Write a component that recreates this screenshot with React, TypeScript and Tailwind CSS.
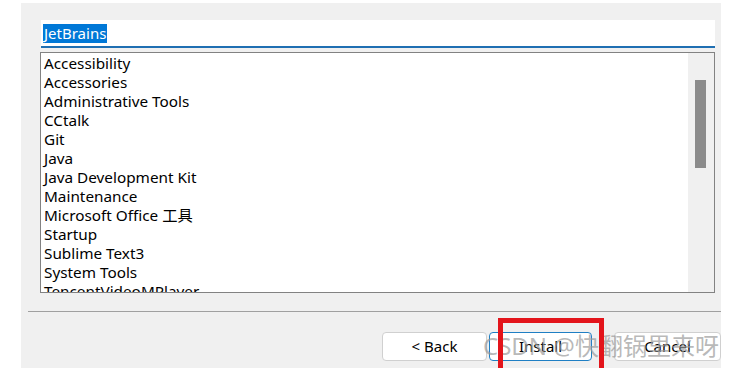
import React from 'react'

const items = [
  'Accessibility',
  'Accessories',
  'Administrative Tools',
  'CCtalk',
  'Git',
  'Java',
  'Java Development Kit',
  'Maintenance',
  'Microsoft Office 工具',
  'Startup',
  'Sublime Text3',
  'System Tools',
  'TencentVideoMPlayer',
]

const uiFont = { fontFamily: '"Noto Sans", "Noto Sans CJK SC", sans-serif' }

export default function App() {
  return (
    <div className="relative w-[730px] h-[368px] bg-white overflow-hidden pt-[3px]" style={uiFont}>
      <div className="ml-[21px] w-[700px] h-[365px] bg-[#f0f0f0] flex flex-col overflow-hidden">
        {/* folder name box */}
        <div className="mt-[17px] ml-[20px] mr-[6px] h-[28px] bg-white border-b-2 border-[#1f6fb2] flex items-center pl-[2px]">
          <span className="bg-[#0078d7] text-white text-[15px] leading-[19px] px-px">JetBrains</span>
        </div>

        {/* start menu folder list */}
        <div className="mt-[4px] ml-[19px] mr-[6px] h-[241px] border border-[#828282] bg-white flex overflow-hidden">
          <div className="flex-1 pl-[3px] pt-px overflow-hidden">
            {items.map((it) => (
              <div key={it} className="text-[15.3px] leading-[19px] text-black whitespace-nowrap">
                {it}
              </div>
            ))}
          </div>
          <div className="w-[26px] bg-[#f0f0f0] pt-[27px] pl-[7px]">
            <div className="w-[11px] h-[88px] bg-[#8b8b8b]" />
          </div>
        </div>

        <div className="mt-[18px] ml-[7px] h-px bg-[#a0a0a0]" />

        {/* buttons */}
        <div className="mt-[20px] ml-[361px] flex items-center text-[15px] text-black">
          <button className="w-[109px] h-[29px] bg-white border border-[#d0d0d0] rounded-[4px]">&lt; Back</button>
          <button className="ml-[2px] w-[107px] h-[29px] bg-white border border-[#1f7fc4] rounded-[4px]">Install</button>
          <button className="ml-[22px] w-[107px] h-[29px] shrink-0 bg-white border border-[#d0d0d0] rounded-[4px]">Cancel</button>
        </div>
      </div>

      {/* watermark */}
      <div className="absolute left-[483px] top-[331px] text-[24px] leading-[30px] text-[#9a9a9a]/70 whitespace-nowrap">
        CSDN @快翻锅里来呀
      </div>

      {/* red highlight */}
      <div className="absolute left-[498px] top-[318px] w-[106px] h-[56px] border-[5px] border-[#e3141b]" />
    </div>
  )
}
